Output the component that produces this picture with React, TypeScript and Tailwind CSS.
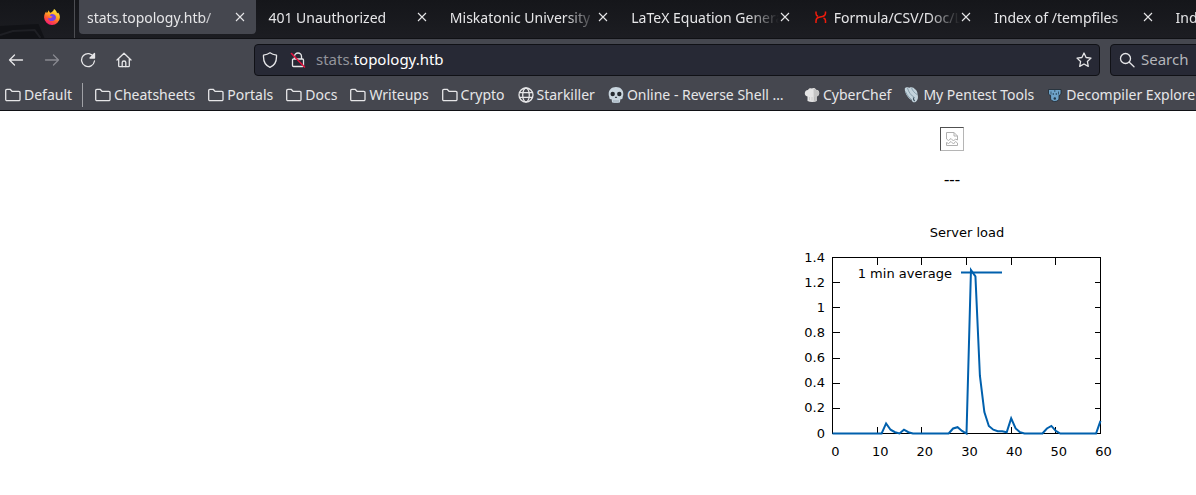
import type { ReactNode } from "react";

type Tab = { title: string; active?: boolean; icon?: boolean };

const tabs: Tab[] = [
  { title: "stats.topology.htb/", active: true },
  { title: "401 Unauthorized" },
  { title: "Miskatonic University |" },
  { title: "LaTeX Equation Genera" },
  { title: "Formula/CSV/Doc/L", icon: true },
  { title: "Index of /tempfiles" },
  { title: "Index of /" },
];

function Stroke({ children, className = "" }: { children: ReactNode; className?: string }) {
  return (
    <svg
      viewBox="0 0 16 16"
      className={`size-4 shrink-0 ${className}`}
      fill="none"
      stroke="currentColor"
      strokeWidth="1.3"
      strokeLinecap="round"
      strokeLinejoin="round"
      aria-hidden="true"
    >
      {children}
    </svg>
  );
}

function Folder() {
  return (
    <Stroke>
      <path d="M.7 12.5v-9a1.2 1.2 0 0 1 1.2-1.2h3.2L7 4.3h6.8A1.2 1.2 0 0 1 15 5.5v7a1.2 1.2 0 0 1-1.2 1.2H1.9A1.2 1.2 0 0 1 .7 12.5Z" />
    </Stroke>
  );
}

function Globe() {
  return (
    <Stroke>
      <circle cx="8" cy="8" r="7" />
      <ellipse cx="8" cy="8" rx="3.3" ry="7" />
      <path d="M1.5 5.7h13M1.5 10.3h13" />
    </Stroke>
  );
}

function Skull() {
  return (
    <svg viewBox="0 0 16 16" className="size-4 shrink-0" aria-hidden="true">
      <path d="M8 0C3.500 0 .7 2.900.7 6.700c0 1.500.1 2.400.7 3.200-.5 1.300.6 2.300 2.200 2.400l.4 2.700c.2.800 1.300 1 4 1s3.800-.2 4-1l.4-2.700c1.600-.1 2.700-1.100 2.200-2.400.6-.8.7-1.700.7-3.200C15.300 2.900 12.500 0 8 0Z" fill="#c9d6df" />
      <circle cx="4.7" cy="7" r="2.2" fill="#252a30" />
      <circle cx="11.3" cy="7" r="2.2" fill="#252a30" />
      <path d="M8 9.2 6.8 11h2.4Z" fill="#252a30" />
      <path d="M6 13v3M8 13v3M10 13v3" stroke="#8797a3" strokeWidth=".7" />
    </svg>
  );
}

function ChefHat() {
  return (
    <svg viewBox="0 0 16 16" className="size-4 shrink-0" aria-hidden="true">
      <path d="M3.500 14V9.500C1.500 9 .7 7.700.8 6 1 3.800 2.600 2.900 4 3c.7-1.600 2.200-2.200 3.700-1.500C9.400.4 11.500 1 12 2.800c2-.1 3.200 1.200 3.200 3.200 0 1.800-.9 3-2.500 3.500V14c-2.500 1.200-6.500 1.200-9.200 0Z" fill="#e4e4e4" />
      <path d="M9.500 1.500c1.500 0 2.300.6 2.500 1.500 2-.1 3.200 1.200 3.200 3 0 1.800-.9 3-2.500 3.500V14l-3 .7V9Z" fill="#c4c4c4" />
      <path d="M5.500 10v3M8 10v3.500M10.500 10v3" stroke="#b4b4b4" strokeWidth=".5" />
    </svg>
  );
}

function Shell() {
  return (
    <svg viewBox="0 0 16 16" className="size-4 shrink-0" aria-hidden="true">
      <path d="M.8 1.500C2 0 4 .2 5.500.8 7.500-.2 10 .6 11 2.300c1.700 1 2.600 3 2.500 5 1 2.800.5 6.200-2 7.700-1.800.8-3.300-.2-3.800-1.800C4.500 11.500.5 6.500.8 1.500Z" fill="#c3d3dc" />
      <path d="M3.500 1c1 4 3.500 7.500 7.500 10M7.500.8c1 3 3 5.200 6 7M1.500 4.500c1.500 3.500 3.500 6 6.500 8.500" stroke="#77909f" strokeWidth=".8" fill="none" />
      <path d="M9.500 10.500c-.3 1.500.2 2.800 1.300 3.500" stroke="#435664" strokeWidth="1.2" fill="none" />
    </svg>
  );
}

function Decompiler() {
  return (
    <svg viewBox="0 0 16 16" className="size-4 shrink-0" aria-hidden="true">
      <path d="M1.500 2.500h12.500v3.500c0 1.500-.8 2.300-2 2.300v3c0 1.800-2 3.200-4.200 3.200s-4.200-1.400-4.200-3.200v-3c-1.200 0-2.100-.8-2.100-2.300Z" fill="#6ea3c9" stroke="#1d252c" strokeWidth=".8" />
      <path d="M4 4.500v3M11.500 4.500v3M7.800 3v2" stroke="#20384b" strokeWidth=".7" />
      <circle cx="6.3" cy="7" r=".8" fill="#20384b" />
      <circle cx="9.3" cy="7" r=".8" fill="#20384b" />
      <circle cx="7.8" cy="11.5" r="1.2" fill="#20384b" />
    </svg>
  );
}

function Firefox() {
  return (
    <svg viewBox="0 0 16 16" className="size-4" role="img" aria-label="Firefox">
      <defs>
        <linearGradient id="flame" x1=".8" y1="0" x2=".3" y2="1">
          <stop offset="0" stopColor="#fff04a" />
          <stop offset=".4" stopColor="#ffab1f" />
          <stop offset=".7" stopColor="#ff5338" />
          <stop offset="1" stopColor="#f5157b" />
        </linearGradient>
      </defs>
      <path d="M10 0c1.700 1.100 2.400 2.300 2.800 3.400.5.100 1 .6 1.300 1.100l.1-1c1.300 1.700 1.700 3.500 1.700 5A7.900 7.900 0 0 1 8 16 7.900 7.900 0 0 1 .1 8.400C.1 6 .8 4 2.200 2.400l.4 1.700c.4-.5.8-.7 1.200-.8C3.900 2.400 4.400 1.600 5 1.200c0 1.500.6 2.200 1.800 2.500C7.300 3.300 9.700 2.300 10 0Z" fill="url(#flame)" />
      <path d="M8 5c2.300 0 4 1.500 4 3.500 0 2.200-1.800 3.600-4 3.600-2.400 0-4-1.400-4.100-3.400C5 9.500 6.200 9.500 7.200 8.700c.5-.5 1.300-.4 1.500-1C8.300 7 6.200 7.400 6 6.400 6.300 5.600 7 5 8 5Z" fill="#7542e5" />
    </svg>
  );
}

const bookmarks: { label: string; icon: ReactNode; wide?: boolean }[] = [
  { label: "Cheatsheets", icon: <Folder /> },
  { label: "Portals", icon: <Folder /> },
  { label: "Docs", icon: <Folder /> },
  { label: "Writeups", icon: <Folder /> },
  { label: "Crypto", icon: <Folder /> },
  { label: "Starkiller", icon: <Globe /> },
  { label: "Online - Reverse Shell …", icon: <Skull />, wide: true },
  { label: "CyberChef", icon: <ChefHat /> },
  { label: "My Pentest Tools", icon: <Shell /> },
  { label: "Decompiler Explorer", icon: <Decompiler /> },
];

function TabStrip() {
  return (
    <div className="flex h-[39px] overflow-hidden border-b border-[#101115] bg-linear-to-b from-[#15161a] to-[#1c1d22]">
      <div className="relative flex w-[75px] shrink-0 items-center justify-end border-r border-[#4c4d52] pr-3.5 pb-1">
        <svg className="absolute bottom-0 left-0 h-3.5 w-full" viewBox="0 0 75 14" fill="none" aria-hidden="true">
          <path d="M0 2 39 0l6 14H0Z" fill="#111216" />
          <path d="M0 11 13 7l22-1 6 8" stroke="#1e1f24" strokeWidth="2" />
        </svg>
        <Firefox />
      </div>
      <div role="tablist" className="-mr-[149px] ml-1 flex min-w-[1266px] flex-1 gap-1 pb-1">
        {tabs.map((tab) => (
          <div
            key={tab.title}
            className={`flex min-w-0 flex-1 items-center rounded-b pr-2.5 pl-2 ${
              tab.active ? "bg-[#45474f]" : ""
            }`}
          >
            {tab.icon && (
              <svg viewBox="0 0 16 16" className="mr-[5px] size-4 shrink-0" fill="none" stroke="#ef1c0c" strokeWidth="1.5" aria-hidden="true">
                <path d="M3 14v-2c0-2.500 1-3.200 3-3.700l3.500-.8c2-.5 3-1.500 3-3.500V2.500M3 2.500v2c0 1.500.7 2.300 2 2.800M12.500 14v-2.500c0-1.500-.7-2-2-2.500" />
              </svg>
            )}
            <button
              role="tab"
              aria-selected={!!tab.active}
              className="min-w-0 flex-1 overflow-hidden mask-r-from-[calc(100%-32px)] pt-0.5 text-left whitespace-nowrap"
            >
              {tab.title}
            </button>
            <button aria-label={`Close ${tab.title}`} className="flex w-3 shrink-0 justify-center">
              <svg viewBox="0 0 10 10" className="size-2.5" stroke="currentColor" strokeWidth="1.1" aria-hidden="true">
                <path d="m1 1 8 8M9 1 1 9" />
              </svg>
            </button>
          </div>
        ))}
      </div>
    </div>
  );
}

function Toolbar() {
  return (
    <div className="flex h-10 items-center overflow-hidden pt-px">
      <div className="flex w-[254px] shrink-0 gap-5 pl-2">
        <button aria-label="Back">
          <Stroke><path d="M14.500 8H1.500M6.500 3l-5 5 5 5" /></Stroke>
        </button>
        <button aria-label="Forward" className="text-[#888990]">
          <Stroke><path d="M1.500 8h13M9.500 3l5 5-5 5" /></Stroke>
        </button>
        <button aria-label="Reload">
          <Stroke>
            <path d="M13.800 5A6.500 6.500 0 1 0 14.500 9" />
            <path d="M14.500 1.500V6H10Z" fill="currentColor" />
          </Stroke>
        </button>
        <button aria-label="Home">
          <Stroke>
            <path d="m1 8 7-6.700L15 8M2.700 7v6.800c0 .5.300.9.900.9h8.800c.600 0 .9-.4.900-.9V7" />
            <path d="M6.200 14.500v-4c0-2 3.600-2 3.600 0v4" />
          </Stroke>
        </button>
      </div>
      <div className="flex h-8 min-w-0 flex-1 items-center rounded border border-[#101116] bg-[#272935] px-[7px]">
        <button aria-label="Tracking protection">
          <Stroke><path d="M8 .8c2 1.500 4 2 6.500 2.300C14.800 8.500 12.500 13.500 8 15.300 3.500 13.500 1.200 8.500 1.500 3.100 4 2.800 6 2.300 8 .8Z" /></Stroke>
        </button>
        <button aria-label="Connection not secure" className="ml-3">
          <Stroke>
            <path d="M4.500 7V4.500a3.500 3.500 0 0 1 7 0V7M3.500 7h9c.600 0 1 .4 1 1v5.500c0 .600-.4 1-1 1h-9c-.600 0-1-.4-1-1V8c0-.600.400-1 1-1Z" />
            <path d="m1.500 1.500 13 13.500" stroke="#e2123f" strokeWidth="1.6" />
          </Stroke>
        </button>
        <div role="textbox" aria-label="Address" tabIndex={0} className="ml-2.5 flex-1 text-[15px] text-white">
          <span className="text-[#93949b]">stats.</span>topology.htb
        </div>
        <button aria-label="Bookmark this page">
          <Stroke><path d="m8 1 2.100 4.500 4.900.600-3.600 3.400.9 4.900L8 12l-4.300 2.400.9-4.900L1 6.100l4.900-.600Z" /></Stroke>
        </button>
      </div>
      <label className="-mr-4 ml-2.5 flex h-8 w-[102px] shrink-0 items-center gap-1.5 rounded border border-[#101116] bg-[#272935] pl-2">
        <Stroke><circle cx="6.5" cy="6.5" r="5" /><path d="m10.300 10.300 4.700 4.400" /></Stroke>
        <input type="search" aria-label="Search" placeholder="Search" className="w-full min-w-0 bg-transparent text-[15px] outline-none placeholder:text-[#b4b5ba]" />
      </label>
    </div>
  );
}

function Bookmark({ label, icon, wide }: { label: string; icon: ReactNode; wide?: boolean }) {
  return (
    <a href="#" className={`flex shrink-0 items-center gap-[3px] whitespace-nowrap ${wide ? "w-[183px]" : ""}`}>
      {icon}
      {label}
    </a>
  );
}

function BookmarksBar() {
  return (
    <nav aria-label="Bookmarks" className="flex h-8 items-center overflow-hidden border-b border-[#101115] pl-[5px]">
      <Bookmark label="Default" icon={<Folder />} />
      <span className="mr-3 ml-2.5 h-6 w-px shrink-0 bg-[#a0a1a6]" />
      <div className="flex gap-[13px]">
        {bookmarks.map((b) => (
          <Bookmark key={b.label} {...b} />
        ))}
      </div>
    </nav>
  );
}

const samples = [
  0, 0, 0, 0, 0, 0, 0, 0, 0, 0, 0, 0, 0.08, 0.03, 0.01, 0, 0.03, 0.01, 0, 0, 0, 0, 0, 0, 0, 0, 0,
  0.04, 0.05, 0.02, 0, 1.3, 1.25, 0.46, 0.17, 0.06, 0.03, 0.018, 0.018, 0.01, 0.12, 0.04, 0.01, 0,
  0, 0, 0, 0, 0.04, 0.06, 0.02, 0, 0, 0, 0, 0, 0, 0, 0, 0, 0.1,
];
const px = (v: number) => 40.5 + (v * 268) / 60;
const py = (v: number) => 218.5 - (v * 176) / 1.4;
const xTicks = [0, 10, 20, 30, 40, 50, 60];
const yTicks = [0, 0.2, 0.4, 0.6, 0.8, 1, 1.2, 1.4];

function LoadChart() {
  return (
    <svg
      viewBox="0 0 320 256"
      className="h-64 w-80 font-['DejaVu_Sans',sans-serif] text-[13px]"
      role="img"
      aria-label="Server load"
    >
      <text x="175" y="22" textAnchor="middle">Server load</text>
      <g stroke="black" fill="none" shapeRendering="crispEdges">
        <rect x="40.5" y="42.5" width="268" height="176" />
        {xTicks.map((t) => (
          <path key={t} d={`M${px(t)} 218.500v-7M${px(t)} 42.500v7`} />
        ))}
        {yTicks.map((t) => (
          <path key={t} d={`M40.500 ${py(t)}h7M308.500 ${py(t)}h-6`} />
        ))}
      </g>
      {xTicks.map((t) => (
        <text key={t} x={px(t) + 3} y="241" textAnchor="middle">{t}</text>
      ))}
      {yTicks.map((t) => (
        <text key={t} x="33" y={py(t) + 4} textAnchor="end">{t}</text>
      ))}
      <text x="160" y="63" textAnchor="end">1 min average</text>
      <g stroke="#0060ad" strokeWidth="2" fill="none">
        <path d="M169 57.500h41" />
        <polyline points={samples.map((v, i) => `${px(i)},${py(v)}`).join(" ")} />
      </g>
    </svg>
  );
}

export default function App() {
  return (
    <div className="min-h-screen bg-white">
      <header className="bg-[#45474f] font-['Noto_Sans',sans-serif] text-sm text-[#e6e6e8]">
        <TabStrip />
        <Toolbar />
        <BookmarksBar />
      </header>
      <main className="flex flex-col items-center overflow-hidden pt-4 pl-[708px] text-black">
        <div role="img" aria-label="Missing image" className="flex size-6 items-center justify-center border border-[#b5b5b5] border-t-[#505050] border-l-[#505050]">
          <svg viewBox="0 0 12 14" className="h-3.5 w-3" fill="none" stroke="#b0b0b0" aria-hidden="true">
            <path d="M.5 7V.5h7.500L11.500 4v4M8 .5V4h3.500M.5 7l2 1.500L5 6.500 7.500 9l2-2 2 1M.5 13.500h11V11L9.500 9.500 7.500 12 5 9.500 2.500 11.500l-2-1Z" />
          </svg>
        </div>
        <p className="mt-[17px] mb-[23px] font-['Liberation_Serif',serif] text-base leading-6">---</p>
        <LoadChart />
      </main>
    </div>
  );
}
